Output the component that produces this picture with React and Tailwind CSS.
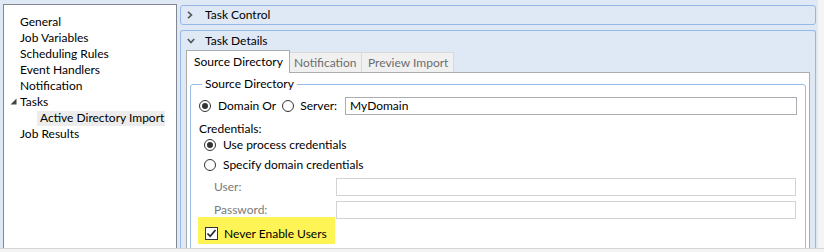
import React from "react";

const font = { fontFamily: 'Lato, "Noto Sans", sans-serif' };

const treeItems = [
  { label: "General" },
  { label: "Job Variables" },
  { label: "Scheduling Rules" },
  { label: "Event Handlers" },
  { label: "Notification" },
  { label: "Tasks", expanded: true },
  { label: "Active Directory Import", selected: true },
  { label: "Job Results" },
];

const Radio = ({ checked }) => (
  <span className="flex h-[12px] w-[12px] shrink-0 items-center justify-center rounded-full border border-[#333333] bg-white">
    {checked && <span className="h-[6px] w-[6px] rounded-full bg-[#333333]" />}
  </span>
);

const Checkbox = ({ checked }) => (
  <span className="flex h-[13px] w-[13px] shrink-0 items-center justify-center border border-[#333333] bg-white">
    {checked && (
      <svg width="11" height="11" viewBox="0 0 11 11">
        <path d="M1.5 5.5 L4.2 8.3 L9.5 2" fill="none" stroke="#222" strokeWidth="1.6" />
      </svg>
    )}
  </span>
);

const TreePanel = () => (
  <div className="ml-[3px] mt-[4px] h-[246px] w-[174px] shrink-0 border border-[#828790] bg-white pt-[9px]">
    {treeItems.map((item) => (
      <div key={item.label} className="relative flex h-[16px] items-center whitespace-nowrap text-[12px] text-black">
        {item.expanded && (
          <svg className="absolute left-[6px] top-[4px]" width="7" height="7" viewBox="0 0 7 7">
            <path d="M6.5 0.5 L6.5 6.5 L0.5 6.5 Z" fill="#444" />
          </svg>
        )}
        {item.selected ? (
          <span className="ml-[33px] flex h-[15px] w-[128px] items-center bg-[#ececec] pl-[3px]">
            {item.label}
          </span>
        ) : (
          <span className="ml-[16px]">{item.label}</span>
        )}
      </div>
    ))}
  </div>
);

const TextBox = ({ value, disabled, className }) => (
  <div
    className={`flex h-[18px] items-center border bg-white pl-[4px] text-[12px] text-black ${
      disabled ? "border-[#d3d3d3]" : "border-[#abadb3]"
    } ${className}`}
  >
    {value}
  </div>
);

const SourceDirectoryTab = () => (
  <div className="mx-[3px] mt-[3px]">
    <fieldset className="rounded-[3px] border border-[#99bbe8] pb-[10px] pl-[8px]">
      <legend className="ml-[3px] px-[3px] text-[12px] leading-[16px] text-black">Source Directory</legend>
      <div className="mt-[5px] flex h-[18px] items-center whitespace-nowrap pr-[8px] text-[12px] text-black">
        <Radio checked />
        <span className="ml-[7px]">Domain Or</span>
        <span className="ml-[6px]">
          <Radio />
        </span>
        <span className="ml-[6px]">Server:</span>
        <TextBox value="MyDomain" className="ml-[8px] flex-1" />
      </div>
      <div className="mt-[6px] h-[16px] text-[12px] leading-[16px] text-black">Credentials:</div>
      <div className="ml-[5px] flex h-[16px] items-center whitespace-nowrap text-[12px] text-black">
        <Radio checked />
        <span className="ml-[7px]">Use process credentials</span>
      </div>
      <div className="ml-[5px] mt-[4px] flex h-[16px] items-center whitespace-nowrap text-[12px] text-black">
        <Radio />
        <span className="ml-[7px]">Specify domain credentials</span>
      </div>
      <div className="mt-[5px] flex h-[18px] items-center pr-[9px] text-[12px] text-[#7a7a7a]">
        <span className="ml-[15px] w-[122px] shrink-0">User:</span>
        <TextBox disabled value="" className="flex-1" />
      </div>
      <div className="mt-[5px] flex h-[18px] items-center pr-[9px] text-[12px] text-[#7a7a7a]">
        <span className="ml-[15px] w-[122px] shrink-0">Password:</span>
        <TextBox disabled value="" className="flex-1" />
      </div>
      <div className="-mt-[2px] ml-[-1px] flex h-[27px] w-[137px] items-center whitespace-nowrap bg-[#fff455] pl-[7px] pt-[6px] text-[12px] text-black">
        <Checkbox checked />
        <span className="ml-[6px]">Never Enable Users</span>
      </div>
    </fieldset>
  </div>
);

const Tabs = () => (
  <div className="mx-[5px] flex flex-col">
    <div className="flex items-end whitespace-nowrap">
      <div className="relative z-10 -mb-px flex h-[23px] w-[104px] items-center border border-b-0 border-[#acacac] bg-white pl-[7px] text-[12px] text-black">
        Source Directory
      </div>
      <div className="flex h-[20px] w-[72px] items-center border border-l-0 border-b-0 border-[#d9d9d9] bg-[#f0f0f0] pl-[4px] text-[12px] text-[#6d6d6d]">
        Notification
      </div>
      <div className="flex h-[20px] w-[92px] items-center border border-l-0 border-b-0 border-[#d9d9d9] bg-[#f0f0f0] pl-[6px] text-[12px] text-[#6d6d6d]">
        Preview Import
      </div>
    </div>
    <div className="h-[200px] border border-[#acacac] bg-white">
      <SourceDirectoryTab />
    </div>
  </div>
);

const App = () => (
  <div style={font} className="h-[252px] w-[824px] overflow-hidden bg-[#f4f4f4]">
    <div className="flex h-[248px] w-[818px] overflow-hidden bg-[#dfe8f5]">
      <TreePanel />
      <div className="ml-[3px] flex w-[636px] flex-col">
        <div className="mt-[5px] flex h-[20px] items-center rounded-[3px] border border-[#95b8e7] text-[12px] text-black">
          <svg className="ml-[6px]" width="6" height="8" viewBox="0 0 6 8">
            <path d="M1 0.8 L4.5 4 L1 7.2" fill="none" stroke="#555" strokeWidth="1.6" />
          </svg>
          <span className="ml-[12px]">Task Control</span>
        </div>
        <div className="mt-[5px] flex flex-1 flex-col rounded-t-[3px] border border-b-0 border-[#95b8e7]">
          <div className="flex h-[19px] items-center text-[12px] text-black">
            <svg className="ml-[6px]" width="8" height="6" viewBox="0 0 8 6">
              <path d="M0.8 1 L4 4.5 L7.2 1" fill="none" stroke="#555" strokeWidth="1.6" />
            </svg>
            <span className="ml-[10px]">Task Details</span>
          </div>
          <Tabs />
        </div>
      </div>
    </div>
    <div className="h-px w-full bg-[#d4d4d4]" />
  </div>
);

export default App;
